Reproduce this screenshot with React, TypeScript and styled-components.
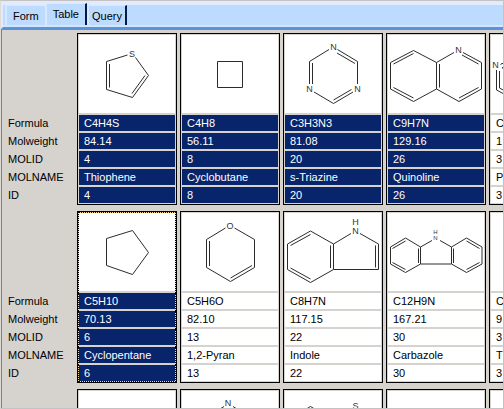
import React, { useState } from "react";
import styled, { createGlobalStyle, css } from "styled-components";

const face = "#d6d3ce";
const navy = "#08246b";

const GlobalStyle = createGlobalStyle`
  * { box-sizing: border-box; }
  body { margin: 0; background: ${face}; }
`;

const Window = styled.div`
  display: flex;
  flex-direction: column;
  height: 100vh;
  overflow: hidden;
  border: 1px solid #c3c3c3;
  border-left-color: #dedbd6;
  background: ${face};
  color: #000;
  font-family: "Liberation Sans", Arial, sans-serif;
  font-size: 11px;
  line-height: 16px;
`;

const TabBar = styled.div`
  display: flex;
  flex: none;
  align-items: flex-end;
  height: 28px;
  padding-left: 2px;
  background: #bddbff;
  border-top: 4px solid #e1ebfd;
  border-left: 2px solid #e1ebfd;
  border-bottom: 2px solid #5a92dc;
  box-shadow: inset 0 -2px 0 #d2e6ff;
`;

const Tab = styled.button<{ $active: boolean }>`
  height: ${(p) => (p.$active ? 22 : 20)}px;
  margin: 0 0 2px;
  padding: ${(p) => (p.$active ? "0 6px 1px" : "0 6px")};
  border: 0 solid #d6e9ff;
  border-width: 1px 0 0 2px;
  background: #bddbff;
  color: #000;
  font: inherit;

  & + & {
    border-right: 2px solid #001c4a;
  }

  &:last-child {
    padding: 0 3px;
  }
`;

const Sheet = styled.main`
  flex: 1;
  min-height: 0;
  display: flex;
  flex-direction: column;
  gap: 6px;
  padding-top: 3px;
  overflow: hidden;
  border-left: 1px solid #808080;
  border-top: 1px solid #848a94;
`;

const Band = styled.table`
  flex: none;
  border-collapse: separate;
  border-spacing: 3px 0;
`;

const FieldName = styled.th`
  padding: 0 0 0 3px;
  font-weight: normal;
  text-align: left;
  vertical-align: top;
`;

const FieldText = styled.div`
  width: 66px;
`;

type Edge = "top" | "middle" | "bottom";

const Slot = styled.td<{ $edge: Edge }>`
  padding: 0;
  border: 0 solid #000;
  border-width: ${(p) => (p.$edge === "top" ? 1 : 0)}px 1px
    ${(p) => (p.$edge === "bottom" ? 1 : 0)}px;
`;

const focusRing = css`
  border-color: #000;
  border-style: dotted;
  background: linear-gradient(${face}, ${face}) padding-box, #ffe08c border-box;
`;

const Frame = styled.div<{ $edge: Edge; $focused: boolean }>`
  width: 98px;
  border: 0 solid ${face};
  border-width: ${(p) => (p.$edge === "top" ? 1 : 0)}px 1px
    ${(p) => (p.$edge === "bottom" ? 1 : 0)}px;
  padding-bottom: ${(p) => (p.$edge === "bottom" ? 0 : 2)}px;
  background: ${face};
  ${(p) => p.$focused && focusRing}
`;

const Value = styled.div<{ $selected: boolean }>`
  height: 16px;
  padding-left: 5px;
  overflow: hidden;
  white-space: nowrap;
  background: ${(p) => (p.$selected ? navy : "#fff")};
  color: ${(p) => (p.$selected ? "#fff" : "#000")};
`;

const Drawing = styled.svg`
  display: block;
  width: 96px;
  height: 78px;
  background: #fff;
  fill: none;
  stroke: #2c2c2c;
  stroke-width: 1;

  text {
    fill: #333;
    stroke: none;
    font-family: "Liberation Sans", Arial, sans-serif;
    text-anchor: middle;
  }
`;

type Atom = { s: string; x: number; y: number; size?: number };
type Molecule = { bonds: string; atoms?: Atom[] };
type Entry = {
  molecule: Molecule;
  values: string[];
  selected?: boolean;
  focused?: boolean;
};

const thiophene: Molecule = {
  bonds:
    "M48.5 20 27.5 26.5V54.5L53.5 62.5 69.5 40.5 56.5 22.5M30.5 29V52.5M53 58.5 66 40.5",
  atoms: [{ s: "S", x: 53, y: 22 }],
};
const cyclobutane: Molecule = { bonds: "M35.5 26.5H60.5V52.5H35.5Z" };
const triazine: Molecule = {
  bonds:
    "M44 14.5 24.5 26.5V49M27.5 28V49M52.5 14.5 72.5 26.5V49M52 18 70 28.5M29 57 48.5 68.5 68 57M48.5 65 66.5 54.5",
  atoms: [
    { s: "N", x: 48.5, y: 15 },
    { s: "N", x: 24.5, y: 57 },
    { s: "N", x: 72.5, y: 57 },
  ],
};
const quinoline: Molecule = {
  bonds:
    "M25.5 15.5 2.5 27.5V54L25.5 66.5 48.5 54V27.5ZM5.5 29 25.5 18.5M5.5 52.5 25.5 63M51.5 29V52.5M48.5 27.5 66 17.5M75 17.5 93.5 27.5V54L71 66.5 48.5 54M74 20 90.5 29M90.5 52.5 71 63",
  atoms: [{ s: "N", x: 70.5, y: 18 }],
};
const clippedRing: Molecule = {
  bonds: "M5.5 35V55L13 59M8.5 36V53L13 55.5M9.5 29.5 11 28.5H13M11.5 32V33.5",
  atoms: [{ s: "N", x: 4.5, y: 33 }],
};
const cyclopentane: Molecule = {
  bonds: "M27.5 25.5V52.5L53.5 61.5 69.5 39.5 53.5 17.5Z",
};
const pyran: Molecule = {
  bonds:
    "M43.5 15 24.5 26.5V54.5L48.5 68.5 72.5 54.5V26.5L52.5 15M27.5 28V53M48.5 65 70 52.5",
  atoms: [{ s: "O", x: 48, y: 15.5 }],
};
const indole: Molecule = {
  bonds:
    "M25.5 18 2.5 31V56.5L25.5 69.5 48.5 56.5V31ZM5.5 32.5 25.5 21.5M5.5 55 25.5 66M45.5 32.5V55M48.5 31 66 20.5M75 20.5 93.5 31V56.5H48.5M90.5 32.5V54.5",
  atoms: [
    { s: "N", x: 70.5, y: 21 },
    { s: "H", x: 70.5, y: 12 },
  ],
};
const carbazole: Molecule = {
  bonds:
    "M17.5 25 2.5 34V51L17.5 59.5 32.5 51V34ZM4.5 35.5 17.5 28M4.5 49.5 17.5 56.5M30.5 35.5V50M32.5 34 44 27.5M52 27.5 63.5 34V51H32.5M63.5 34 78.5 25 94 34V51L78.5 59.5 63.5 51M65.5 35.5V50M78.5 28 91.5 35.5M91.5 49.5 78.5 56.5",
  atoms: [
    { s: "N", x: 47.5, y: 27, size: 6 },
    { s: "H", x: 47.5, y: 21, size: 6 },
  ],
};
const diazole: Molecule = {
  bonds: "M42 15.5 34 20.5M51 15.5 59 20.5M50 18 56 22",
  atoms: [{ s: "N", x: 46, y: 15 }],
};
const thiazine: Molecule = {
  bonds: "M18 20 25.5 15.5 33 20M21 21 25.5 18.5M66 18 60 22",
  atoms: [{ s: "S", x: 70.5, y: 18 }],
};
const blank: Molecule = { bonds: "" };

const fields = ["Formula", "Molweight", "MOLID", "MOLNAME", "ID"];
const noValues = ["", "", "", "", ""];

const bands: Entry[][] = [
  [
    { molecule: thiophene, values: ["C4H4S", "84.14", "4", "Thiophene", "4"], selected: true },
    { molecule: cyclobutane, values: ["C4H8", "56.11", "8", "Cyclobutane", "8"], selected: true },
    { molecule: triazine, values: ["C3H3N3", "81.08", "20", "s-Triazine", "20"], selected: true },
    { molecule: quinoline, values: ["C9H7N", "129.16", "26", "Quinoline", "26"], selected: true },
    { molecule: clippedRing, values: ["C", "1", "3", "P", "3"] },
  ],
  [
    {
      molecule: cyclopentane,
      values: ["C5H10", "70.13", "6", "Cyclopentane", "6"],
      selected: true,
      focused: true,
    },
    { molecule: pyran, values: ["C5H6O", "82.10", "13", "1,2-Pyran", "13"] },
    { molecule: indole, values: ["C8H7N", "117.15", "22", "Indole", "22"] },
    { molecule: carbazole, values: ["C12H9N", "167.21", "30", "Carbazole", "30"] },
    { molecule: blank, values: ["C", "9", "3", "T", "3"] },
  ],
  [
    { molecule: blank, values: noValues },
    { molecule: diazole, values: noValues },
    { molecule: thiazine, values: noValues },
    { molecule: blank, values: noValues },
    { molecule: blank, values: noValues },
  ],
];

function Structure({ molecule }: { molecule: Molecule }) {
  return (
    <Drawing viewBox="0 0 96 78" aria-hidden="true">
      <path d={molecule.bonds} />
      {molecule.atoms?.map((a, i) => (
        <text key={i} x={a.x} y={a.y} fontSize={a.size ?? 9}>
          {a.s}
        </text>
      ))}
    </Drawing>
  );
}

function RecordBand({ entries }: { entries: Entry[] }) {
  const named = entries[0].values[0] !== "";
  return (
    <Band>
      <tbody>
        <tr>
          <FieldName as="td">
            <FieldText />
          </FieldName>
          {entries.map((e, i) => (
            <Slot key={i} $edge="top">
              <Frame $edge="top" $focused={!!e.focused}>
                <Structure molecule={e.molecule} />
              </Frame>
            </Slot>
          ))}
        </tr>
        {fields.map((name, row) => {
          const edge: Edge = row === fields.length - 1 ? "bottom" : "middle";
          return (
            <tr key={name}>
              <FieldName scope="row">
                <FieldText>{named ? name : ""}</FieldText>
              </FieldName>
              {entries.map((e, i) => (
                <Slot key={i} $edge={edge}>
                  <Frame $edge={edge} $focused={!!e.focused}>
                    <Value $selected={!!e.selected}>{e.values[row]}</Value>
                  </Frame>
                </Slot>
              ))}
            </tr>
          );
        })}
      </tbody>
    </Band>
  );
}

export default function App() {
  const [tab, setTab] = useState("Table");
  return (
    <>
      <GlobalStyle />
      <Window>
        <TabBar role="tablist">
          {["Form", "Table", "Query"].map((name) => (
            <Tab
              key={name}
              type="button"
              role="tab"
              aria-selected={tab === name}
              $active={tab === name}
              onClick={() => setTab(name)}
            >
              {name}
            </Tab>
          ))}
        </TabBar>
        <Sheet>
          {bands.map((entries, i) => (
            <RecordBand key={i} entries={entries} />
          ))}
        </Sheet>
      </Window>
    </>
  );
}
